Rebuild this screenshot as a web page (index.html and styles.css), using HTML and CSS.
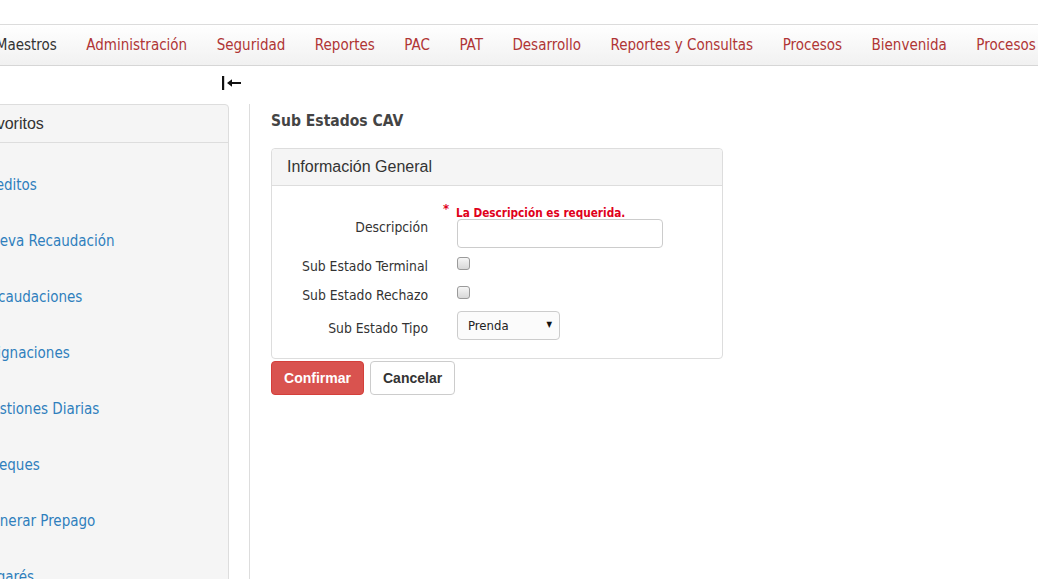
FILE: index.html
```html
<!DOCTYPE html>
<html lang="es">
<head>
<meta charset="utf-8">
<title>Sub Estados CAV</title>
<link rel="stylesheet" href="styles.css">
</head>
<body>
<div class="page">
  <div class="topgap"></div>
  <nav class="navbar">
    <a class="nav-item nav-dark">Maestros</a>
    <a class="nav-item">Administración</a>
    <a class="nav-item">Seguridad</a>
    <a class="nav-item">Reportes</a>
    <a class="nav-item">PAC</a>
    <a class="nav-item">PAT</a>
    <a class="nav-item">Desarrollo</a>
    <a class="nav-item">Reportes y Consultas</a>
    <a class="nav-item">Procesos</a>
    <a class="nav-item">Bienvenida</a>
    <a class="nav-item">Procesos</a>
  </nav>
  <div class="toggle-row">
    <svg class="toggle-icon" width="20" height="14" viewBox="0 0 20 14"><rect x="0" y="0" width="2.2" height="14" fill="#111"/><path d="M5 7 L10 3.2 L10 6.1 L19 6.1 L19 7.9 L10 7.9 L10 10.8 Z" fill="#111"/></svg>
  </div>
  <div class="layout">
    <aside class="sidebar">
      <div class="side-head">Favoritos</div>
      <ul class="side-list">
        <li><a>Creditos</a></li>
        <li><a>Nueva Recaudación</a></li>
        <li><a>Recaudaciones</a></li>
        <li><a>Asignaciones</a></li>
        <li><a>Gestiones Diarias</a></li>
        <li><a>Cheques</a></li>
        <li><a>Generar Prepago</a></li>
        <li><a>Pagarés</a></li>
      </ul>
    </aside>
    <main class="main">
      <h1 class="title">Sub Estados CAV</h1>
      <section class="panel">
        <div class="panel-head">Información General</div>
        <div class="panel-body">
          <div class="form-grid">
            <div></div>
            <div class="error"><span class="star">*</span>La Descripción es requerida.</div>
            <label class="lbl lbl-desc">Descripción</label>
            <div><input class="text-input" type="text"></div>
            <label class="lbl lbl-check">Sub Estado Terminal</label>
            <div class="check-cell"><input class="check" type="checkbox"></div>
            <label class="lbl lbl-check">Sub Estado Rechazo</label>
            <div class="check-cell"><input class="check" type="checkbox"></div>
            <label class="lbl lbl-select">Sub Estado Tipo</label>
            <div class="select-wrap">
              <select class="select"><option>Prenda</option></select>
              <span class="select-arrow">▼</span>
            </div>
          </div>
        </div>
      </section>
      <div class="actions">
        <button class="btn btn-danger">Confirmar</button>
        <button class="btn btn-default">Cancelar</button>
      </div>
    </main>
  </div>
</div>
</body>
</html>
```

FILE: styles.css
```css
html, body {
  margin: 0;
  padding: 0;
  background: #fff;
}
body {
  width: 1038px;
  height: 579px;
  overflow: hidden;
  font-family: "DejaVu Sans Condensed", "DejaVu Sans", sans-serif;
  color: #333;
}
.page {
  width: 1038px;
  height: 579px;
  overflow: hidden;
}
.topgap {
  height: 24px;
}
.navbar {
  height: 40px;
  border-top: 1px solid #dcdcdc;
  border-bottom: 1px solid #d6d6d6;
  background: linear-gradient(#ffffff, #f1f1f1);
  display: flex;
  align-items: center;
  margin-left: -19px;
  width: 1200px;
  white-space: nowrap;
}
.nav-item {
  font-size: 15px;
  color: #b03535;
  padding: 0 14.75px;
  line-height: 40px;
}
.nav-dark {
  color: #333;
}
.toggle-row {
  height: 38px;
  padding-left: 222px;
  display: flex;
  align-items: center;
}
.toggle-icon {
  display: block;
  margin-top: -4px;
}
.layout {
  display: flex;
  align-items: flex-start;
}
.sidebar {
  flex: none;
  width: 260px;
  margin-left: -33px;
  background: #f5f5f5;
  border: 1px solid #dddddd;
  border-radius: 4px;
  height: 520px;
}
.side-head {
  font-family: "Liberation Sans", Arial, sans-serif;
  font-size: 16px;
  height: 37px;
  line-height: 37px;
  padding-left: 10px;
  border-bottom: 1px solid #dddddd;
  color: #333;
}
.side-list {
  list-style: none;
  margin: 0;
  padding: 0;
}
.side-list li {
  height: 56px;
  display: flex;
  align-items: center;
  padding-left: 13px;
}
.side-list li:first-child {
  margin-top: 14px;
}
.side-list a {
  font-size: 15px;
  color: #2f7fbd;
}
.main {
  flex: none;
  margin-left: 20px;
  border-left: 1px solid #dddddd;
  padding-left: 21px;
  min-height: 500px;
  width: 700px;
}
.title {
  margin: 7px 0 0 0;
  font-size: 15.5px;
  font-weight: bold;
  color: #444;
  line-height: 20px;
}
.panel {
  margin-top: 17px;
  width: 450px;
  border: 1px solid #dddddd;
  border-radius: 4px;
  background: #fff;
}
.panel-head {
  height: 36px;
  line-height: 36px;
  background: #f5f5f5;
  border-bottom: 1px solid #dddddd;
  border-radius: 4px 4px 0 0;
  padding-left: 15px;
  font-family: "Liberation Sans", Arial, sans-serif;
  font-size: 16px;
  color: #333;
}
.panel-body {
  padding: 15px 0 18px 0;
}
.form-grid {
  display: grid;
  grid-template-columns: 156px 1fr;
  column-gap: 29px;
  align-items: start;
}
.error {
  font-size: 11.7px;
  font-weight: bold;
  color: #e0001a;
  line-height: 16px;
  height: 18px;
  margin-left: -1px;
}
.star {
  display: inline-block;
  margin-left: -13px;
  width: 13px;
  font-size: 13px;
  vertical-align: 4px;
}
.lbl {
  text-align: right;
  font-size: 13.8px;
  color: #333;
  line-height: 16px;
}
.lbl-desc {
  padding-top: 0;
}
.text-input {
  box-sizing: border-box;
  width: 206px;
  height: 29px;
  border: 1px solid #cccccc;
  border-radius: 4px;
  display: block;
  margin: 0;
}
.lbl-check {
  padding-top: 10px;
}
.check-cell {
  padding-top: 9px;
  height: 20px;
}
.check {
  appearance: none;
  -webkit-appearance: none;
  display: block;
  margin: 0;
  width: 13px;
  height: 13px;
  box-sizing: border-box;
  border: 1px solid #9a9a9a;
  border-radius: 3px;
  background: linear-gradient(#f6f6f6, #d8d8d8);
}
.lbl-select {
  padding-top: 14px;
}
.select-wrap {
  position: relative;
  width: 103px;
  margin-top: 5px;
}
.select {
  appearance: none;
  -webkit-appearance: none;
  box-sizing: border-box;
  width: 103px;
  height: 29px;
  border: 1px solid #cccccc;
  border-radius: 4px;
  background: #fbfbfb;
  font-family: "DejaVu Sans Condensed", "DejaVu Sans", sans-serif;
  font-size: 13px;
  color: #222;
  padding: 0 0 0 10px;
  margin: 0;
  display: block;
}
.select-arrow {
  position: absolute;
  right: 8px;
  top: 9px;
  font-size: 8px;
  color: #111;
  pointer-events: none;
}
.actions {
  margin-top: 2px;
  display: flex;
  gap: 6px;
}
.btn {
  font-family: "Liberation Sans", Arial, sans-serif;
  font-size: 14px;
  font-weight: bold;
  height: 34px;
  border-radius: 4px;
  padding: 0 12px;
  margin: 0;
}
.btn-danger {
  width: 93px;
  background: #d9534f;
  border: 1px solid #d43f3a;
  color: #fff;
}
.btn-default {
  width: 85px;
  background: #fff;
  border: 1px solid #cccccc;
  color: #333;
}
```
